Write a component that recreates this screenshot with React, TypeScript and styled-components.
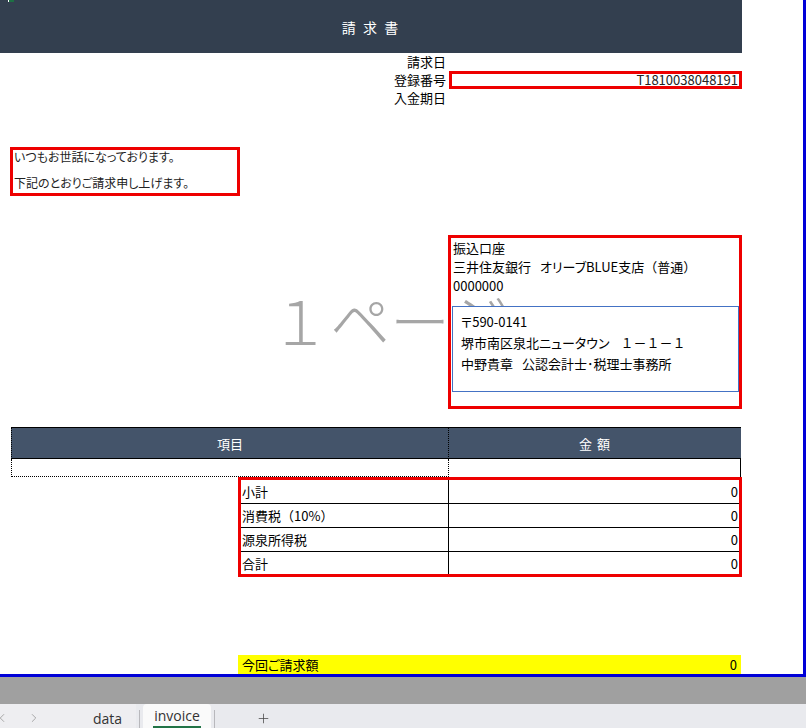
import styled, { createGlobalStyle } from "styled-components";
import { ChevronLeft, ChevronRight, Plus } from "lucide-react";

const GlobalStyle = createGlobalStyle`
  html, body {
    margin: 0;
    padding: 0;
    overflow: hidden;
    background: #fff;
  }
  body {
    font-family: "Noto Sans CJK JP", "Noto Sans", sans-serif;
    font-feature-settings: "palt";
    color: #000;
  }
`;

const summaryRows = [
    { label: "小計", wide: "", value: "0" },
    { label: "消費税", wide: "（10%）", value: "0" },
    { label: "源泉所得税", wide: "", value: "0" },
    { label: "合計", wide: "", value: "0" },
];

function App() {
    return (
        <Screen>
            <GlobalStyle />
            <Sheet>
                <Watermark>１ページ</Watermark>
                <SelectionHandle />
                <Page>
                    <TitleBar>請 求 書</TitleBar>

                    <InfoGrid>
                        <Label>請求日</Label>
                        <div />
                        <Label>登録番号</Label>
                        <ValueBox>T1810038048191</ValueBox>
                        <Label>入金期日</Label>
                        <div />
                    </InfoGrid>

                    <Greeting>
                        <div>いつもお世話になっております。</div>
                        <div>下記のとおりご請求申し上げます。</div>
                    </Greeting>

                    <BankBox>
                        <BankLine>振込口座</BankLine>
                        <BankLine>
                            三井住友銀行<Gap w={9} />オリーブBLUE支店<Wide>（普通）</Wide>
                        </BankLine>
                        <BankLine>0000000</BankLine>
                        <AddressBox>
                            <AddressLine>〒590-0141</AddressLine>
                            <AddressLine>
                                堺市南区泉北ニュータウン<Gap w={11} />
                                <Wide>１－１－１</Wide>
                            </AddressLine>
                            <AddressLine>
                                中野貴章<Gap w={9} />公認会計士･税理士事務所
                            </AddressLine>
                        </AddressBox>
                    </BankBox>

                    <ItemTable>
                        <HeadCell side="left">項目</HeadCell>
                        <HeadCell side="right">金 額</HeadCell>
                        <BodyCell side="left" />
                        <BodyCell side="right" />
                    </ItemTable>

                    <Summary>
                        {summaryRows.map((row, i) => (
                            <SumRow key={row.label} last={i === summaryRows.length - 1}>
                                <SumLabel>
                                    {row.label}
                                    {row.wide && <Wide>{row.wide}</Wide>}
                                </SumLabel>
                                <SumValue>{row.value}</SumValue>
                            </SumRow>
                        ))}
                    </Summary>

                    <TotalBar>
                        <span>今回ご請求額</span>
                        <span>0</span>
                    </TotalBar>
                </Page>
            </Sheet>

            <GrayBand />

            <TabBar>
                <NavArea>
                    <ChevronLeft size={14} strokeWidth={1.2} />
                    <ChevronRight size={14} strokeWidth={1.2} />
                </NavArea>
                <SheetTab>data</SheetTab>
                <TabDivider />
                <SheetTab active>
                    <span>invoice</span>
                </SheetTab>
                <TabDivider />
                <AddButton>
                    <Plus size={15} strokeWidth={1.2} />
                </AddButton>
            </TabBar>
        </Screen>
    );
}

const Screen = styled.div`
    width: 806px;
    height: 728px;
    display: flex;
    flex-direction: column;
    overflow: hidden;
`;

const Sheet = styled.div`
    position: relative;
    width: 806px;
    height: 677px;
    box-sizing: border-box;
    border-right: 3px solid #0000d8;
    border-bottom: 3px solid #0000d8;
    background: #fff;
    overflow: hidden;
`;

const Watermark = styled.div`
    position: absolute;
    left: 270px;
    top: 289px;
    font-size: 60px;
    line-height: 1;
    font-weight: 300;
    color: #a6a6a6;
    font-feature-settings: normal;
    white-space: nowrap;
`;

const SelectionHandle = styled.div`
    position: absolute;
    left: 8px;
    top: 0;
    width: 5px;
    height: 2px;
    background: #1d7044;
    border-left: 1px solid #fff;
    z-index: 3;
`;

const Wide = styled.span`
    font-feature-settings: normal;
`;

const Gap = styled.span<{ w: number }>`
    display: inline-block;
    width: ${(p) => p.w}px;
`;

const Page = styled.div`
    width: 742px;
    display: flex;
    flex-direction: column;
    font-size: 13px;
`;

const TitleBar = styled.div`
    height: 53px;
    background: #333f4f;
    color: #fff;
    font-size: 14px;
    letter-spacing: 2px;
    display: flex;
    align-items: center;
    justify-content: center;
`;

const InfoGrid = styled.div`
    display: grid;
    grid-template-columns: 449px 293px;
    grid-template-rows: 18px 18px 19px;
`;

const Label = styled.div`
    text-align: right;
    padding-right: 3px;
    line-height: 18px;
`;

const ValueBox = styled.div`
    box-sizing: border-box;
    border: 3px solid #ee0000;
    text-align: right;
    padding-right: 1px;
    line-height: 12px;
    color: #222;
`;

const Greeting = styled.div`
    margin: 39px 0 0 10px;
    width: 230px;
    height: 49px;
    box-sizing: border-box;
    border: 3px solid #ee0000;
    padding: 0 1px;
    display: flex;
    flex-direction: column;
    gap: 12px;
    line-height: 14px;
    font-size: 12px;
    color: #222;
`;

const BankBox = styled.div`
    margin: 39px 0 0 448px;
    width: 294px;
    height: 174px;
    box-sizing: border-box;
    border: 3px solid #ee0000;
    display: flex;
    flex-direction: column;
`;

const BankLine = styled.div`
    line-height: 19px;
    padding-left: 2px;
    white-space: nowrap;
`;

const AddressBox = styled.div`
    position: relative;
    margin: 11px 0 0 1px;
    border: 1px solid #4472c4;
    background: #fff;
    padding: 4px 8px 17px;
`;

const AddressLine = styled.div`
    line-height: 21px;
    white-space: nowrap;
`;

const ItemTable = styled.div`
    margin: 18px 0 0 11px;
    width: 730px;
    display: grid;
    grid-template-columns: 438px 292px;
    grid-template-rows: 32px 18px;
`;

const HeadCell = styled.div<{ side: "left" | "right" }>`
    box-sizing: border-box;
    background: #44546a;
    color: #fff;
    border-top: 1px solid #000;
    border-bottom: 1px solid #000;
    border-left: ${(p) => (p.side === "left" ? "1px dotted #000" : "none")};
    border-right: ${(p) => (p.side === "left" ? "1px dotted #000" : "none")};
    display: flex;
    align-items: center;
    justify-content: center;
    letter-spacing: ${(p) => (p.side === "right" ? "1px" : "0")};
`;

const BodyCell = styled.div<{ side: "left" | "right" }>`
    box-sizing: border-box;
    border-left: ${(p) => (p.side === "left" ? "1px dotted #000" : "none")};
    border-right: ${(p) => (p.side === "left" ? "1px dotted #000" : "1px solid #000")};
    border-bottom: ${(p) => (p.side === "left" ? "1px dotted #000" : "none")};
`;

const Summary = styled.div`
    margin-left: 238px;
    width: 504px;
    height: 100px;
    box-sizing: border-box;
    border: 3px solid #ee0000;
    display: grid;
    grid-template-rows: 24px 24px 24px 22px;
`;

const SumRow = styled.div<{ last: boolean }>`
    display: grid;
    grid-template-columns: 208px 1fr;
    box-sizing: border-box;
    border-bottom: ${(p) => (p.last ? "none" : "1px solid #000")};
    align-items: stretch;
`;

const SumLabel = styled.div`
    border-right: 1px solid #000;
    padding-left: 1px;
    display: flex;
    align-items: center;
    white-space: nowrap;
`;

const SumValue = styled.div`
    display: flex;
    align-items: center;
    justify-content: flex-end;
    padding-right: 1px;
`;

const TotalBar = styled.div`
    margin: 78px 0 0 238px;
    width: 503px;
    height: 19px;
    background: #ffff00;
    display: flex;
    align-items: center;
    justify-content: space-between;
    padding: 0 4px 0 4px;
    box-sizing: border-box;
`;

const GrayBand = styled.div`
    height: 27px;
    background: #a0a0a0;
`;

const TabBar = styled.div`
    height: 24px;
    background: #e9eaee;
    display: flex;
    align-items: stretch;
    font-family: "Open Sans", "Noto Sans", sans-serif;
    font-size: 14px;
    color: #333;
`;

const NavArea = styled.div`
    width: 78px;
    display: flex;
    align-items: center;
    gap: 18px;
    padding-top: 4px;
    color: #8a8a8a;
    background: #eeeef1;

    svg:first-child {
        margin-left: -5px;
    }
`;

const SheetTab = styled.div<{ active?: boolean }>`
    display: flex;
    align-items: center;
    padding: ${(p) => (p.active ? "0 10px" : "5px 14px 0 15px")};
    background: ${(p) => (p.active ? "#fafafa" : "#eeeef1")};
    border-radius: ${(p) => (p.active ? "4px 4px 0 0" : "0")};
    margin-left: ${(p) => (p.active ? "3px" : "0")};

    span {
        line-height: 20px;
        padding: 0 1px;
        border-bottom: 2px solid #217346;
        margin-top: 2px;
    }
`;

const TabDivider = styled.div`
    width: 1px;
    margin: 6px 0 0 3px;
    background: #b8b8bc;
`;

const AddButton = styled.div`
    display: flex;
    align-items: center;
    padding: 4px 0 0 41px;
    color: #444;
`;

export default App;
